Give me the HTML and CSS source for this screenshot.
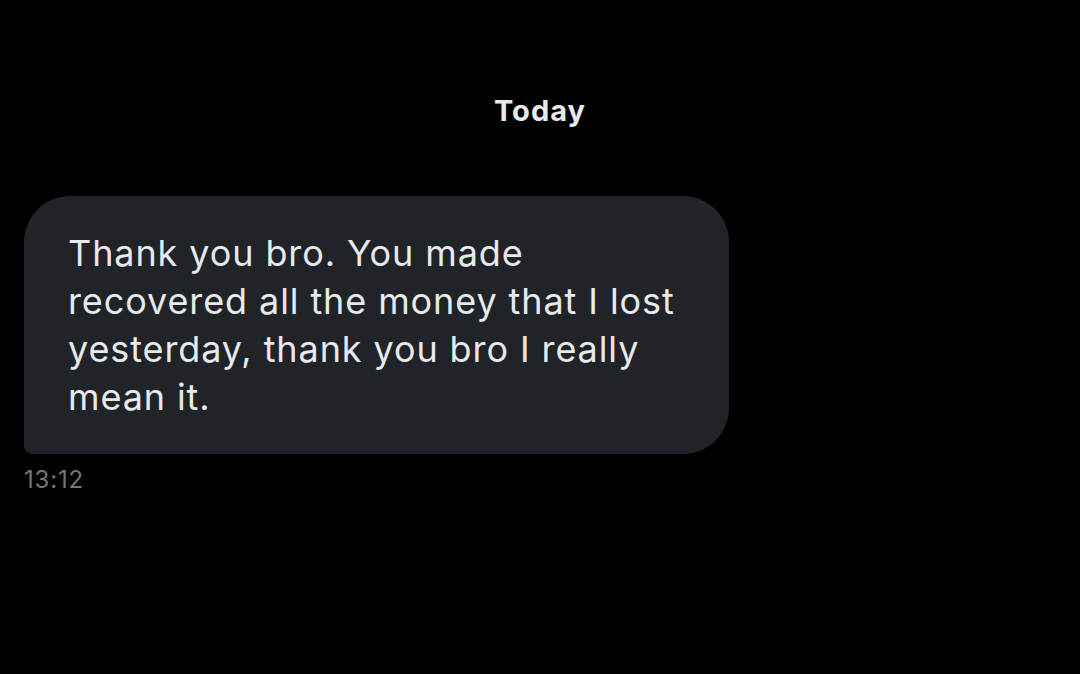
FILE: index.html
```html
<!DOCTYPE html>
<html lang="en">
<head>
  <meta charset="UTF-8">
  <meta name="viewport" content="width=device-width, initial-scale=1.0">
  <title>Chat</title>
  <link rel="stylesheet" href="styles.css">
</head>
<body>
    <div class="chat">
        <div class="fecha">Today</div>
        <div class="mensaje">
            <div class="burbuja">Thank you bro. You made recovered all the money that I lost yesterday, thank you bro I really mean it.</div>
            <div class="hora">13:12</div>
        </div>
    </div>
</body>
</html>
```
FILE: styles.css
```css
/* Estilos globales */
*{
    box-sizing: border-box;
}
body{
    margin: 0;
    background-color: #000;
    font-family: 'Inter', 'Roboto', sans-serif;
}
.chat{
    display: flex;
    flex-direction: column;
    padding: 92px 24px 0;
}
.fecha{
    text-align: center;
    color: #e7e9ea;
    font-size: 29px;
    font-weight: 700;
    letter-spacing: 1px;
    line-height: 38px;
    margin-bottom: 66px;
}
.mensaje{
    display: flex;
    flex-direction: column;
    align-items: flex-start;
}
.burbuja{
    width: 705px;
    background-color: #202327;
    color: #e7e9ea;
    font-size: 36px;
    letter-spacing: 0.9px;
    line-height: 48px;
    padding: 33px 40px 33px 44px;
    border-radius: 46px 46px 46px 8px;
}
.hora{
    margin-top: 12px;
    color: #71767b;
    font-size: 24px;
    letter-spacing: 0.8px;
    line-height: 28px;
}
```
